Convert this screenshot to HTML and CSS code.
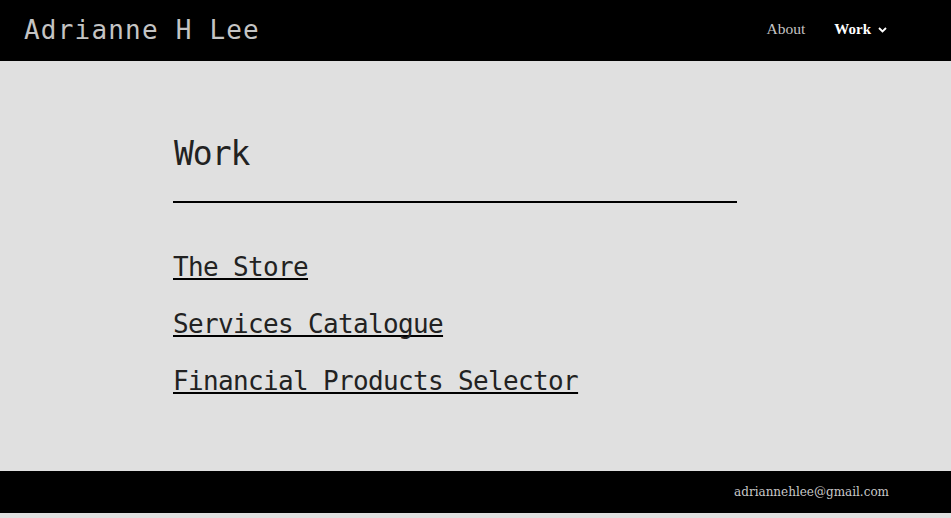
FILE: index.html
```html
<!DOCTYPE html>
<html>
<head>
<meta charset="utf-8">
<link rel="stylesheet" href="styles.css">
</head>
<body>
<header class="site-header">
  <div class="brand">Adrianne H Lee</div>
  <nav class="nav">
    <a class="nav-link" href="#">About</a>
    <a class="nav-link nav-active" href="#">Work
      <svg class="chev" width="9" height="6" viewBox="0 0 9 6"><path d="M1 1 L4.5 4.5 L8 1" fill="none" stroke="#fff" stroke-width="1.8"/></svg>
    </a>
  </nav>
</header>
<main class="main">
  <div class="content">
    <h1 class="title">Work</h1>
    <hr class="rule">
    <ul class="links">
      <li><a href="#">The Store</a></li>
      <li><a href="#">Services Catalogue</a></li>
      <li><a href="#">Financial Products Selector</a></li>
    </ul>
  </div>
</main>
<footer class="site-footer">
  <span class="email">adriannehlee@gmail.com</span>
</footer>
</body>
</html>
```
FILE: styles.css
```css
html, body { margin: 0; padding: 0; }
body { background: #e0e0e0; }
.site-header {
  background: #000;
  height: 61px;
  display: flex;
  align-items: center;
  justify-content: space-between;
  padding: 0 0 0 24px;
}
.brand {
  font-family: "DejaVu Sans Mono", monospace;
  font-size: 26px;
  letter-spacing: 1.2px;
  color: #c4c4c4;
  margin-top: -2px;
}
.nav { display: flex; align-items: center; gap: 29px; margin-right: 64px; margin-top: -3px; }
.nav-link {
  font-family: "Liberation Serif", serif;
  font-size: 15.5px;
  color: #c4c4c4;
  text-decoration: none;
  display: flex;
  align-items: center;
  gap: 7px;
}
.nav-active { color: #fff; font-weight: bold; font-size: 15px; }
.chev { display: block; margin-top: 2px; }
.main { height: 410px; }
.content { padding: 73px 0 0 173px; width: 564px; }
.title {
  margin: 0;
  font-family: "DejaVu Sans Mono", monospace;
  font-weight: normal;
  font-size: 33px;
  letter-spacing: -1px;
  color: #222;
  line-height: 40px;
  padding-left: 1px;
}
.rule { border: 0; border-top: 2.5px solid #000; margin: 27px 0 0 0; height: 0; }
.links { list-style: none; margin: 47px 0 0 0; padding: 0; }
.links li { height: 57px; }
.links a {
  font-family: "DejaVu Sans Mono", monospace;
  font-size: 26px;
  letter-spacing: -0.65px;
  color: #222;
  text-decoration: underline;
  text-decoration-color: #000;
  text-decoration-thickness: 2px;
  text-underline-offset: 2px;
  text-decoration-skip-ink: none;
  line-height: 34px;
}
.site-footer {
  background: #000;
  height: 42px;
  display: flex;
  align-items: center;
  justify-content: flex-end;
  padding-right: 62px;
}
.email {
  font-family: "DejaVu Serif", serif;
  font-size: 12px;
  color: #c8c8c8;
}
```
